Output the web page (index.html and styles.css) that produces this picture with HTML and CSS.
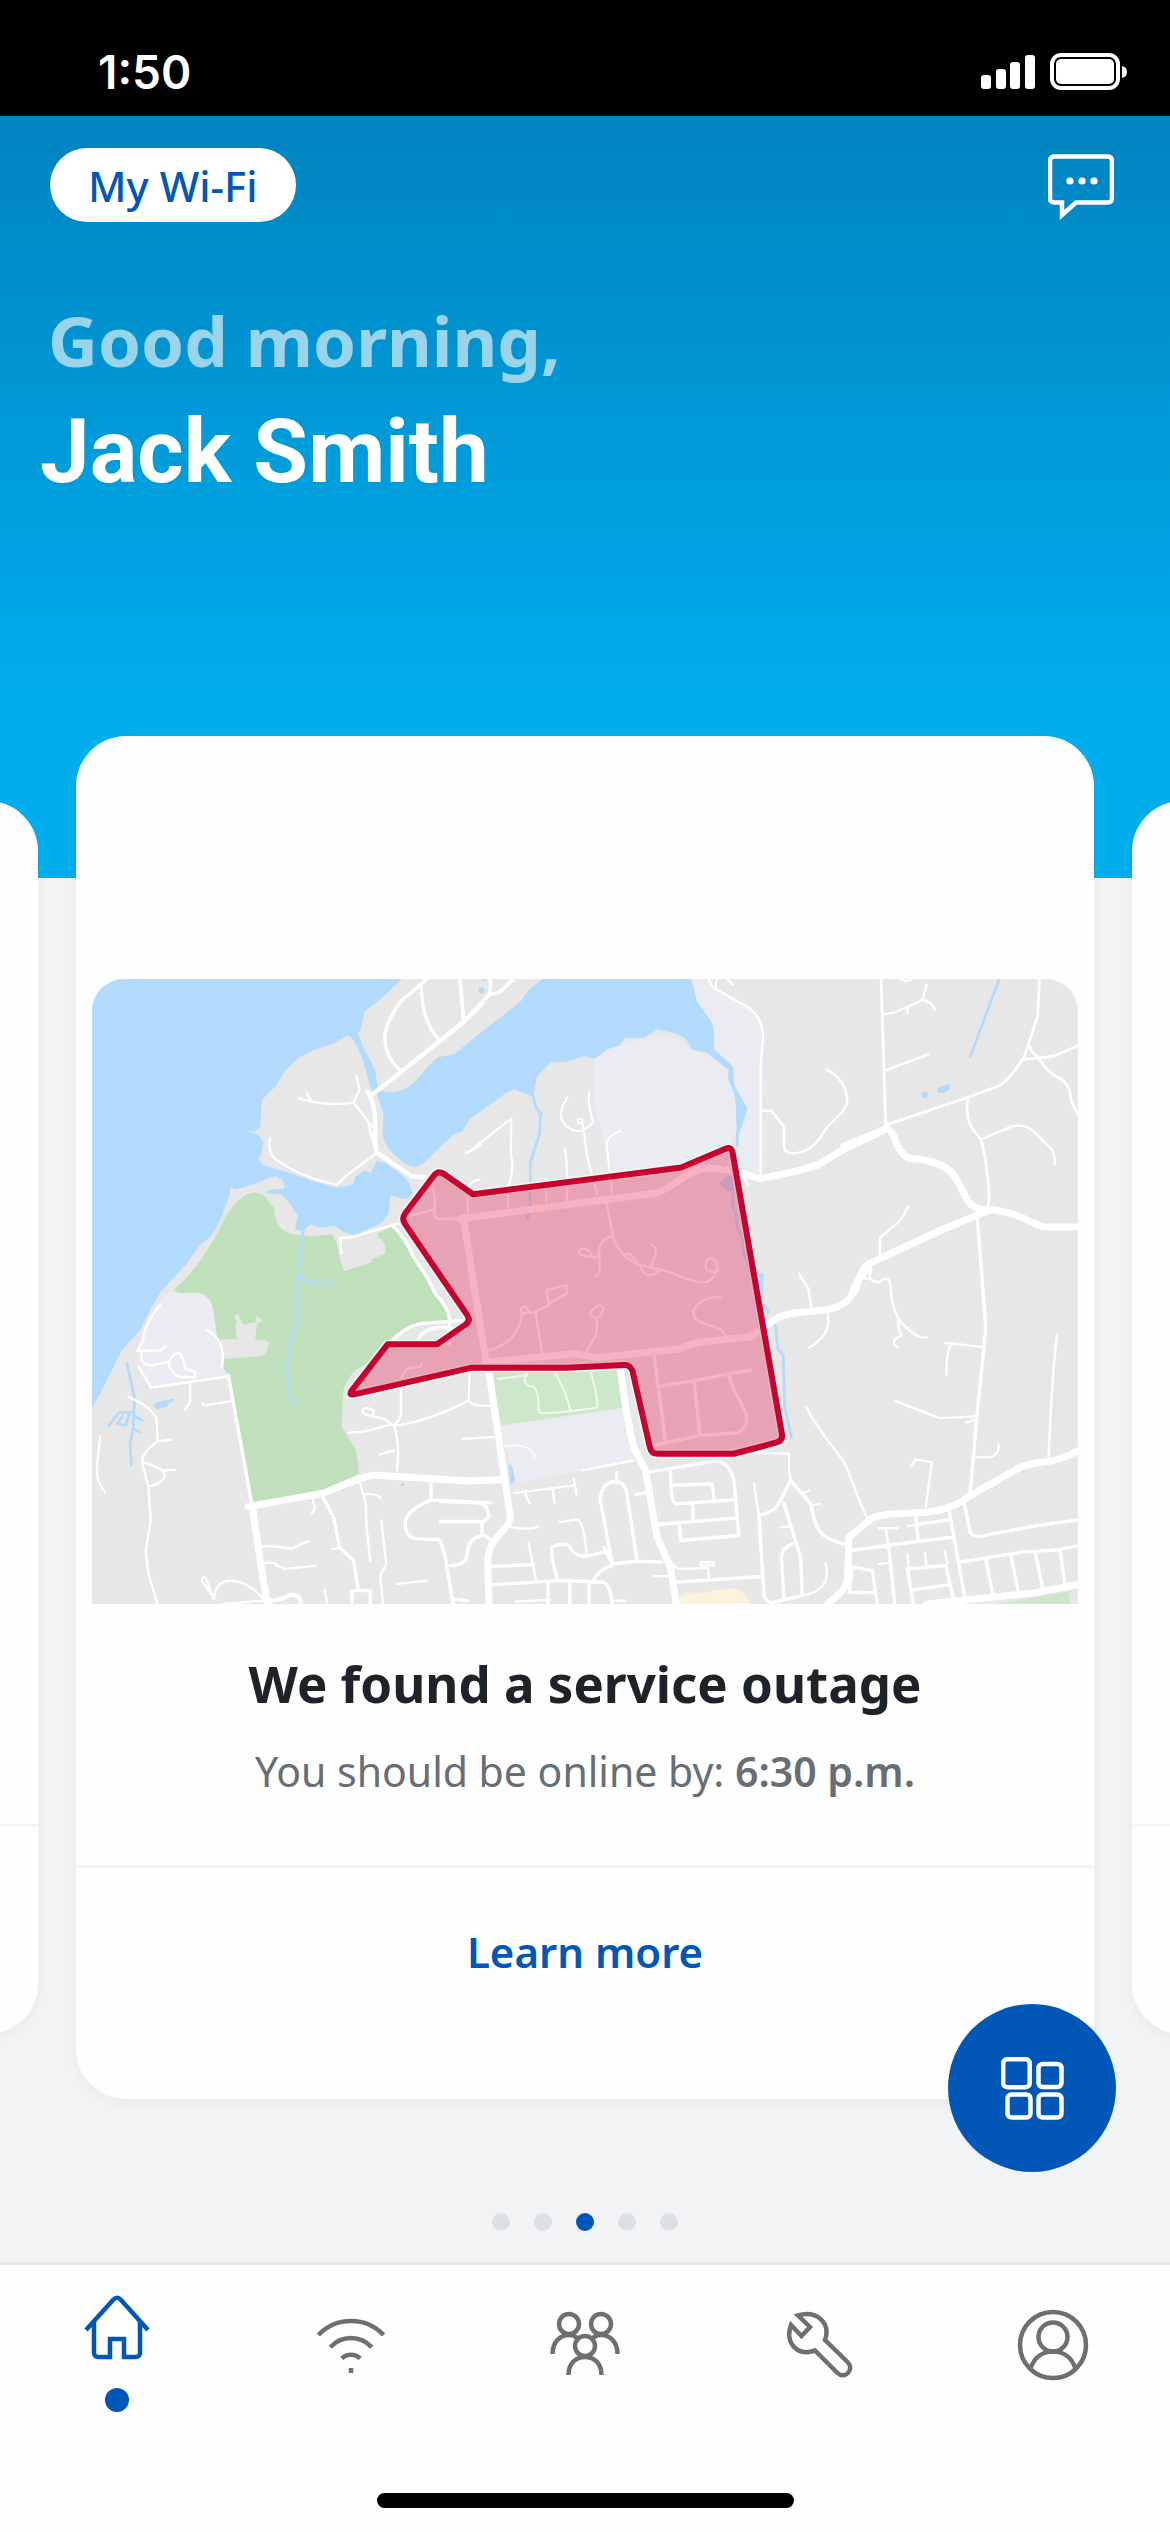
FILE: index.html
```html
<!DOCTYPE html>
<html lang="en">
<head>
  <meta charset="UTF-8">
  <meta name="viewport" content="width=device-width, initial-scale=1.0">
  <title>My Wi-Fi</title>
  <link rel="stylesheet" href="styles.css">
</head>
<body>

  <div class="statusbar">
    <span class="time">1:50</span>
    <div class="status-icons">
      <svg width="54" height="36" viewBox="0 0 54 36" fill="#fff">
        <rect x="0" y="21" width="10" height="14" rx="3"/>
        <rect x="15" y="15" width="10" height="20" rx="3"/>
        <rect x="29" y="8" width="10" height="27" rx="3"/>
        <rect x="44" y="1" width="10" height="34" rx="3"/>
      </svg>
      <svg width="78" height="38" viewBox="0 0 78 38">
        <rect x="2" y="2" width="66" height="33" rx="9" fill="none" stroke="#fff" stroke-width="4"/>
        <rect x="6" y="6" width="58" height="25" rx="5" fill="#fff"/>
        <path d="M72 13q5 1 5 6t-5 6z" fill="#fff"/>
      </svg>
    </div>
  </div>

  <header class="header">
    <div class="topbar">
      <button class="pill">My Wi-Fi</button>
      <button class="chat" aria-label="Chat">
        <svg width="66" height="68" viewBox="0 0 66 68">
          <path d="M6 2.500H60a4 4 0 0 1 4 4V44.500a4 4 0 0 1-4 4H28L14 61V48.500H6a4 4 0 0 1-4-4V6.500a4 4 0 0 1 4-4z" fill="none" stroke="#fff" stroke-width="4.500"/>
          <circle cx="22" cy="27" r="3.600" fill="#fff"/>
          <circle cx="34" cy="27" r="3.600" fill="#fff"/>
          <circle cx="46" cy="27" r="3.600" fill="#fff"/>
        </svg>
      </button>
    </div>
    <p class="greeting">Good morning,</p>
    <h1 class="name">Jack Smith</h1>
  </header>

  <main class="main">
    <div class="carousel">
      <div class="card side">
        <div class="card-body"></div>
        <div class="card-footer"></div>
      </div>

      <div class="card">
        <div class="card-body">
          <svg class="map" viewBox="0 0 2955 1872" role="img" aria-label="Map of the outage area">
            <!-- water, parks and campuses -->
            <g transform="translate(-36 -57)">
              <path class="water" d="M36 57H965L905 115 852 155 843 205 833 218 848 260 885 330 893 390Q950 405 985 380C1020 355 1050 300 1080 290L1120 283 1205 215 1320 125 1345 90 1385 57H1832L1850 125 1890 180Q1905 200 1903 215L1898 265 1958 320 1960 375Q2005 425 2000 450L1970 535 1965 440 1962 400 1942 355 1945 330 1880 278 1835 268 1815 235 1780 218 1730 208 1690 233 1635 233 1615 258 1585 265 1542 297 1512 288 1455 305 1410 307 1368 352 1360 410 1302 388 1275 400 1170 475 1145 515 1120 522 1080 560 1030 610Q1000 635 955 595 910 560 907 520L910 462 890 405 870 380 845 290 820 240 803 226 755 252 705 268 660 290 615 330 590 375 545 420 540 500 525 515 503 510 535 525 550 545 545 580 533 595 550 615 625 637 690 660 770 683 820 672 825 650 850 632 872 637 890 600 915 608 960 640 985 665 997 700Q985 720 965 715L930 705 925 760Q905 790 890 795L820 825 790 815 765 797 720 802 690 793 670 812 645 808 652 765 625 725 605 703 560 700 565 690 612 685Q620 660 582 645L540 665 470 688 452 682 445 715 420 780 395 825 360 855 320 910 245 990 215 1040 180 1110 125 1170 60 1300 36 1343z"/>
              <path class="park" d="M280 990C360 920 400 840 440 765 480 705 520 680 555 710L582 745C585 790 600 815 640 822L690 828 755 822 770 850 780 900 793 933 875 905 873 898 915 880 913 850 890 820 935 798Q960 820 1000 900L1070 1000 1105 1050V1085L1000 1095Q960 1105 915 1150L860 1210Q795 1240 788 1300L785 1400 825 1465Q835 1500 837 1540L720 1595 517 1625 445 1245 425 1225 400 1050z"/>
              <path class="land" d="M408 1138L470 1137 465 1095 472 1090 462 1068 475 1060 483 1083Q490 1100 505 1088L525 1087 530 1066 547 1080 530 1092 525 1140H555Q572 1145 564 1160 555 1187 540 1188L428 1196z"/>
              <path class="campus" d="M270 998H350Q390 1000 400 1050L405 1115 430 1170V1225L445 1245 213 1282 175 1218 170 1170 200 1095 240 1020z"/>
              <path class="thinwater" d="M580 625V650M670 805L660 880 655 940Q680 975 710 970 755 960 770 978M655 940L650 990 652 1080 630 1150 618 1220 625 1260 622 1300 653 1332M140 1205L163 1310 160 1400 150 1450 154 1518M118 1356H162M118 1356L84 1398M130 1362L112 1392M148 1358L136 1398M112 1390L142 1396M162 1366L190 1382M160 1405L182 1416"/>
              <path class="water" d="M220 1330L250 1320 282 1314 280 1322 262 1332 260 1340 228 1346zM960 1576L967 1565 975 1577zM890 830L905 830 900 838z"/>
            </g>
            <g transform="translate(1044 -57)">
              <path class="campus" d="M462 297L505 268 555 250 610 236 655 228 720 240 750 268 800 283 862 330 860 355 880 400 886 440V525L870 550 725 622 510 640 492 550 470 460Q452 390 462 297zM756 57H812L820 80 930 145Q968 175 968 240L960 640 905 625 892 540 921 445 882 378 879 320 820 265Q825 210 810 180L770 125z"/>
              <path class="thinwater" d="M278 405L285 440 300 460 298 520 270 605 269 730 260 783M890 515V560M884 690Q865 720 885 760L890 800 905 835 915 880"/>
              <path class="water" d="M275 405L290 440 308 460 300 480 290 450zM838 670Q850 640 890 650V690Q850 700 838 670zM903 868H918L930 920H920zM118 82a9 11 0 1 0 10 0zM122 57h14q-5 14-14 0zM955 940H968V1000H958z"/>
              <path class="park2" d="M155 1230L527 1218 547 1343 182 1395z"/>
              <path class="campus" d="M182 1395L547 1343 582 1500 420 1533 222 1568z"/>
              <path class="water" d="M204 1512q14-6 20 50l-14 8z"/>
              <path class="thinwater" d="M970 1030L985 1060M1003 1090L1012 1165 1028 1185 1032 1340 1053 1435"/>
              <path d="M718 1930V1910L735 1895 790 1897 830 1888 885 1883 912 1898 930 1930z" fill="#fdf3dd"/>
            </g>
            <g transform="translate(2004 -57)">
              <path class="thinwater" d="M715 57L628 292"/>
              <path class="water" d="M482 402q2-10 16-8l6 10-8 9q-14 1-14-11zM528 385L565 370 567 388 550 398H532z"/>
              <path class="park2" d="M720 1930L922 1892 930 1930z"/>
            </g>

            <!-- roads -->
            <g transform="translate(-36 -57)" class="roads">
              <path class="w6" d="M655 415L700 425Q760 437 820 427L838 390 828 348M680 400L695 425M820 427L880 505M1157 577Q1180 570 1200 545"/>
              <path class="w6" d="M570 533Q560 580 590 600 660 650 770 674L800 645 888 580M783 880L780 832Q820 835 850 820L963 787M865 495L888 575"/>
              <path class="w9" d="M1040 57L960 125Q915 190 914 230 912 290 962 332M1022 75Q1025 190 1080 242M1138 57L1150 185"/>
              <path class="w12" d="M870 408L1080 242 1150 185 1205 130M862 395Q890 440 884 520L888 575Q940 615 995 648L1040 652"/>
              <path class="w9" d="M935 795Q975 830 1000 890L1040 950 1065 1000Q1110 1050 1107 1080V1150M1145 1080L1020 1090Q970 1100 930 1150M1140 1110C1060 1090 1015 1110 1012 1150"/>
              <path class="w6" d="M975 770L1058 750M1048 670Q1070 700 1062 760 1065 780 1085 777L1140 774"/>
            </g>
            <g transform="translate(1044 -57)" class="roads">
              <path class="w5" d="M78 578Q110 570 130 540L213 475 212 580Q222 640 203 680V740M82 780V690Q90 660 118 658M382 410Q345 465 375 495 420 535 458 485 440 430 446 395M427 492L440 590 455 645 470 700M412 483a7 7 0 1 1 14 0 7 7 0 1 1-14 0M372 565Q382 590 380 720M318 655V725M540 513Q490 530 500 570L515 700"/>
              <path class="w6" d="M830 57Q820 75 830 90L920 140Q965 170 968 230L960 320V645M805 57Q810 80 830 90M860 57L877 74M960 452H992L1030 500V560Q1030 580 1060 580 1110 575 1140 530L1160 500 1205 455 1220 430Q1220 360 1157 328"/>
              <path class="w9" d="M60 57L70 185M0 245L70 185 145 105Q155 80 148 57M145 105L180 95 220 57"/>
              <path class="w6" d="M498 728L520 840Q550 900 600 915L690 935Q760 970 800 965 830 950 830 915 825 890 800 895 790 925 800 930 820 940 834 930M515 830Q480 830 475 880 485 940 465 947M472 892Q410 890 415 870 440 855 455 888M550 885Q570 870 590 910M635 855Q660 870 630 918M600 915Q605 950 640 942L657 930"/>
              <path class="w6" d="M147 1170Q235 1145 245 1060M252 1040a11 11 0 1 0 1 0M245 1060L285 1055 325 1035 318 990 378 973V1000L325 1030M285 1055L305 1180M435 1180L468 1120 470 1075Q440 1065 455 1050 480 1025 490 1045 480 1070 470 1075M855 1125C840 1090 790 1100 765 1075 745 1045 780 1010 840 1010 860 1020 880 1055M873 1062a13 11 0 1 0 12-11z"/>
              <path class="w9" d="M640 1180L675 1445M660 1277L755 1262 865 1240 930 1230M760 1260L778 1420M865 1240C870 1310 960 1370 895 1417L778 1425 640 1455"/>
              <path class="w16" d="M60 776L340 738 640 700C700 690 750 610 830 625L880 632 960 655Q1050 640 1130 615L1205 570 1340 505M70 774L95 940 140 1220"/>
              <path class="w16" d="M140 1205L400 1180 470 1192 720 1165Q760 1145 830 1140L930 1130 980 1095Q1010 1065 1060 1058L1160 1048Q1220 1035 1235 1000 1250 950 1285 925"/>
              <path class="w6" d="M1075 940L1103 985 1112 1040M1158 1048Q1180 1120 1105 1162M905 640L922 675"/>
            </g>
            <g transform="translate(2004 -57)" class="roads">
              <path class="w6" d="M368 163L400 158 485 120 498 73M485 120Q515 125 522 150M440 145V158M375 330L503 283M420 57q20 12 32 0M660 538L750 500Q790 488 820 515L870 565Q883 580 882 613M443 738L420 780 358 832V885M328 920V955H300M328 955Q350 975 370 955 390 950 390 990 395 1060 430 1095 475 1140 497 1130M413 1080Q410 1100 422 1125 390 1140 403 1155L410 1160"/>
              <path class="w7" d="M361 57L375 495 620 412 715 377Q750 355 790 290L830 170 836 57M805 255Q810 275 830 290 860 340 905 360 930 380 930 420L952 465M790 298L880 288 952 257M620 412Q615 480 635 505L660 538Q675 580 685 700L682 740"/>
              <path class="w9" d="M650 775L675 1105 650 1350 628 1595"/>
              <path class="w16" d="M250 558L378 505Q395 510 410 555 425 590 450 595 540 600 580 645L620 720Q640 750 680 748 740 750 800 780L845 800H952M680 752L540 810 325 910Q300 925 285 990"/>
            </g>
            <g transform="translate(-36 873)" class="roads">
              <path class="w6" d="M380 180Q440 210 425 290M240 105Q190 165 190 210L172 242 240 240 258 228M185 250Q180 285 215 285L265 275Q280 245 300 250 315 275 315 295L345 305V320H300Q270 310 265 275M175 288L213 352 330 335 445 318M330 335V395L315 418M450 393L372 405 366 398M145 380Q220 410 230 450L233 512Q180 550 187 580L205 650 212 750 197 840 205 910Q215 940 232 1000M233 512L275 508M187 575Q280 600 245 630 230 645 205 648M245 600L285 598M60 500C50 600 40 620 75 665 95 690 100 730M36 736L148 730 156 775M308 490L370 720 415 865M212 750Q240 720 290 722L370 723M330 730L305 760 320 778 330 765 318 750M320 778L326 800M205 904C290 905 300 875 350 868L520 865M36 916L122 913M515 378Q530 430 478 470M537 428C510 480 540 520 562 560 565 600 545 630 508 627"/>
              <path class="w6" d="M403 985L365 930Q370 910 380 930L400 985Q410 930 450 930 500 930 550 985M430 1000L550 990M545 828Q580 825 635 835 660 820 685 812M545 880Q585 870 590 885L615 895 705 886M697 685L705 715 693 730M733 958L742 1000M755 836L780 832M840 640L857 700 858 760 870 872M850 672Q895 668 900 683M903 750L918 880 900 915 908 1000M950 940L1040 930M805 487C880 487 900 465 935 463 910 435 870 440 850 430 840 410 860 410 880 420L878 440M962 355V430Q960 450 940 465 960 510 950 600M940 465C1000 465 1100 420 1115 415L1165 390 1168 300M900 552L942 540M1148 505L1240 500M1025 278Q1020 295 990 292 960 305 960 350M1165 390Q1175 410 1235 406"/>
              <path class="w9" d="M445 315L515 700M728 680L760 740 778 830 820 870 833 950M815 1000V960H870V1000M1052 635V688L1230 697M1048 690C980 720 965 750 980 785 990 810 1010 805 1075 807 1095 815 1095 850L1115 1000M1010 712Q1030 750 1060 750L1200 755M1035 870L1095 860M1035 870L1050 1000M1110 888Q1150 885 1158 860 1150 800 1200 798"/>
              <path class="w16" d="M505 708L730 668Q840 620 880 614L1160 632 1260 628M517 708Q540 880 562 1000"/>
              <path class="w12" d="M562 990Q600 990 625 975 660 965 662 1000"/>
            </g>
            <g transform="translate(1044 873)" class="roads">
              <path class="w5" d="M173 326L255 315Q245 345 280 350 295 360 295 425 310 432 390 422L470 412Q475 395 450 300M340 300Q380 370 390 422M190 528Q270 515 285 560M215 303H260V318" opacity=".7"/>
              <path class="w6" d="M220 668L405 645M400 625L408 672M337 655L342 697M255 660Q255 680 268 697M528 605V640M212 770Q270 780 293 767M358 755L410 747Q430 750 438 850M265 820L287 930M225 993L328 988M515 990H553M640 917H680M690 875L712 895 803 893 805 920M780 885V875H818V885H780M910 545L1045 550V600L1050 630M940 640L955 735M1085 670L1105 660M1115 705L1138 700M1020 770L1050 768M1155 880Q1175 960 1085 975M1097 410C1130 480 1180 530 1210 575 1240 640 1260 710 1280 745M425 600L580 570"/>
              <path class="w9" d="M625 605L820 572Q865 570 880 630L895 795 720 810 717 765M690 605Q690 700 705 700L880 688M697 645L815 640 820 685M757 700V750M650 762L885 743M585 672L615 667M490 830L515 880 590 872 665 875M515 880L480 690Q480 635 530 632 560 640 562 690L590 872M510 840L430 858Q400 855 385 825 360 815 335 830 330 850 350 925M515 885Q470 900 460 930M155 888L280 882M155 943L350 930 490 935Q510 945 515 1000M323 935V1000M388 940V1000M446 940V1000M710 935L960 918M955 735L970 970Q975 1000 1000 995L1085 975 1080 860 1030 700M955 733Q1000 730 1020 690L1050 630 1110 700C1125 760 1120 800 1210 820M1055 820Q1025 830 1022 860L1030 985M0 693L110 697Q145 700 145 740L130 753H0M125 755V790L155 810M30 885Q80 885 80 850 85 800 125 797M0 810L15 860 38 1000M35 985L80 990"/>
              <path class="w16" d="M145 300L210 740Q210 760 165 805 140 840 142 880L146 1000M540 300Q560 450 580 530L615 600 650 800 690 890 707 1000"/>
            </g>
            <g transform="translate(2004 873)" class="roads">
              <path class="w6" d="M553 218L665 230M572 222Q555 245 557 312M405 392L535 443 645 438M615 457L645 448M640 560H690Q715 555 713 523M888 197C875 300 870 400 863 560M450 587L465 567 513 575 495 710M355 773H410M375 773L383 825M355 880L385 877M442 767L465 763M440 853L445 895M493 847L497 890M552 843L560 880"/>
              <path class="w9" d="M610 695L628 785Q635 800 660 797L830 765 952 748M272 840L400 822 575 800M465 740L472 808M465 762L565 748M565 720L612 980M595 875L785 845 890 838 952 825M675 865L695 968M750 855L772 962M823 845L845 950M898 840L912 940M383 820L402 1000M440 895L555 885M440 895L458 1000M455 958L568 942M555 885L578 985M275 890L335 900 350 1000M275 890L265 965 345 967"/>
              <path class="w16" d="M952 540Q900 570 850 575 790 580 760 600L620 680Q580 715 500 725L400 730Q340 735 325 750L265 800 260 930Q250 965 200 1000M952 942L820 967 500 1000"/>
            </g>

            <!-- outage area -->
            <g transform="translate(-36 -57)">
              <path class="halo" d="M1061 646L975 759Q963 775 974 791L1161 1065Q1172 1082 1155 1093L1070 1152H922L815 1290Q803 1306 822 1302L1175 1222H1460L1632 1214Q1648 1213 1656 1232L1708 1460Q1712 1480 1732 1480H1960L2088 1446Q2107 1441 2104 1421L1956 578Q1953 558 1935 566L1802 622 1178 702 1090 641Q1073 630 1061 646z"/>
              <path class="outage" d="M1061 646L975 759Q963 775 974 791L1161 1065Q1172 1082 1155 1093L1070 1152H922L815 1290Q803 1306 822 1302L1175 1222H1460L1632 1214Q1648 1213 1656 1232L1708 1460Q1712 1480 1732 1480H1960L2088 1446Q2107 1441 2104 1421L1956 578Q1953 558 1935 566L1802 622 1178 702 1090 641Q1073 630 1061 646z"/>
            </g>
          </svg>
          <h2 class="title">We found a service outage</h2>
          <p class="eta">You should be online by: <b>6:30 p.m.</b></p>
        </div>
        <div class="card-footer">
          <a href="#" class="learn">Learn more</a>
        </div>
      </div>

      <div class="card side">
        <div class="card-body"></div>
        <div class="card-footer"></div>
      </div>
    </div>

    <div class="dots">
      <span></span>
      <span></span>
      <span class="on"></span>
      <span></span>
      <span></span>
    </div>

    <button class="fab" aria-label="Shortcuts">
      <svg width="63" height="63" viewBox="0 0 63 63" fill="none" stroke="#fff" stroke-width="4.500">
        <rect x="2.200" y="2.200" width="26.500" height="28" rx="4"/>
        <rect x="37.500" y="7" width="23" height="23" rx="4"/>
        <rect x="6.500" y="37.500" width="23" height="23" rx="4"/>
        <rect x="37.500" y="37.500" width="23" height="23" rx="4"/>
      </svg>
    </button>
  </main>

  <footer class="bottom">
    <nav class="nav">
      <a href="#" class="active" aria-label="Home">
        <svg viewBox="0 0 72 72">
          <path d="M5 38L32 8Q36 3.500 40 8L67 38M13 29V61a4 4 0 0 0 4 4H29V47H43V65H55a4 4 0 0 0 4-4V29"/>
        </svg>
        <span class="dot"></span>
      </a>
      <a href="#" aria-label="Wi-Fi">
        <svg viewBox="0 0 72 72">
          <path d="M3.400 26A45 45 0 0 1 68.600 26M15.300 38.300A27.500 27.500 0 0 1 56.700 38.300M26.800 49.500A13 13 0 0 1 45.200 49.500"/>
          <rect class="solid" x="33.800" y="59" width="4.500" height="5"/>
        </svg>
      </a>
      <a href="#" aria-label="Profiles">
        <svg viewBox="0 0 72 72">
          <circle cx="20" cy="15" r="10"/>
          <circle cx="52" cy="15" r="10"/>
          <circle cx="36" cy="37" r="10"/>
          <path d="M3.500 45C3.500 33 11 26 20 26q5 0 8 3M68.500 45C68.500 33 61 26 52 26q-5 0-8 3M19.500 66C19.500 54 27 48 36 48S52.500 54 52.500 66"/>
        </svg>
      </a>
      <a href="#" aria-label="Tools">
        <svg viewBox="0 0 72 72">
          <path d="M15 6.500L27 18 18.500 27 8 16C2 33 13 48 32 41.500L54.500 64A7 7 0 0 0 65 53.500L42 31C48 14 34 1 15 6.500z"/>
        </svg>
      </a>
      <a href="#" aria-label="Account">
        <svg viewBox="0 0 72 72">
          <circle cx="36" cy="36" r="33"/>
          <circle cx="36" cy="28" r="14.500"/>
          <path d="M13.500 60C17 48 26 42.500 36 42.500S55 48 58.500 60"/>
        </svg>
      </a>
    </nav>
    <div class="home-indicator"></div>
  </footer>

</body>
</html>
```
FILE: styles.css
```css
* {
  margin: 0;
  padding: 0;
  box-sizing: border-box;
}

body {
  background: #f2f3f5;
  font-family: "Noto Sans", "Open Sans", sans-serif;
  min-height: 100vh;
  display: flex;
  flex-direction: column;
}

button {
  border: 0;
  background: none;
  font-family: inherit;
  cursor: pointer;
}

svg {
  display: block;
}

.statusbar {
  background: #000;
  color: #fff;
  height: 116px;
  padding: 28px 42px 0 98px;
  display: flex;
  align-items: center;
  justify-content: space-between;
}
.time {
  font-family: Inter, sans-serif;
  font-size: 46px;
  font-weight: 600;
}
.status-icons {
  display: flex;
  align-items: center;
  gap: 15px;
}

.header {
  background: linear-gradient(180deg, #0083bf 0%, #00aeee 78%, #00aeee 100%);
  padding: 32px 40px 376px;
}
.topbar {
  display: flex;
  align-items: flex-end;
  justify-content: space-between;
  padding: 0 16px 0 10px;
  margin-bottom: 78px;
}
.pill {
  background: #fff;
  color: #0057b8;
  height: 74px;
  padding: 0 38px;
  border-radius: 37px;
  font-size: 42px;
  font-weight: 500;
}
.greeting {
  color: #9ad4eb;
  font-size: 69px;
  font-weight: 700;
  line-height: 80px;
  padding-left: 8px;
  margin-bottom: 22px;
}
.name {
  color: #fff;
  font-family: Roboto, sans-serif;
  font-size: 89px;
  font-weight: 700;
  line-height: 100px;
}

.main {
  position: relative;
  flex: 1;
  margin-top: -142px;
}
.carousel {
  display: flex;
  justify-content: center;
  gap: 38px;
  overflow-x: clip;
}
.card {
  flex: 0 0 87%;
  background: #fefefe;
  border-radius: 50px;
  box-shadow: 0 4px 12px rgba(0, 0, 0, 0.04);
  display: flex;
  flex-direction: column;
  text-align: center;
}
.card-body {
  flex: 1;
  padding: 243px 16px 66px;
}
.card-footer {
  border-top: 3px solid #f3f4f5;
  height: 234px;
  padding-top: 56px;
}
.side {
  margin: 65px 0;
}
.side .card-footer {
  height: 210px;
}
.title {
  color: #1d2329;
  font-size: 51px;
  font-weight: 700;
  line-height: 68px;
  margin: 45px 0 26px;
}
.eta {
  color: #686e74;
  font-size: 41px;
  line-height: 56px;
}
.eta b {
  font-weight: 600;
}
.learn {
  color: #0057b8;
  font-size: 42px;
  font-weight: 600;
  line-height: 56px;
  text-decoration: none;
}

.map {
  width: 100%;
  height: auto;
  background: #e7e7e7;
  border-radius: 32px 32px 0 0;
}
.land {
  fill: #e7e7e7;
}
.water {
  fill: #b2dafc;
}
.park {
  fill: #c0e0bb;
}
.park2 {
  fill: #cde7ca;
}
.campus {
  fill: #ebecf1;
}
.thinwater {
  fill: none;
  stroke: #b2dafc;
  stroke-width: 8;
}
.roads path {
  fill: none;
  stroke: #fff;
  stroke-linecap: round;
  stroke-linejoin: round;
}
.roads .w5 { stroke-width: 6; }
.roads .w6 { stroke-width: 7; }
.roads .w7 { stroke-width: 8; }
.roads .w9 { stroke-width: 10; }
.roads .w12 { stroke-width: 13; }
.roads .w16 { stroke-width: 21; }
.halo {
  fill: none;
  stroke: #eaf9f6;
  stroke-width: 28;
  stroke-linejoin: round;
}
.outage {
  fill: rgba(233, 61, 106, 0.4);
  stroke: #c8002d;
  stroke-width: 18;
  stroke-linejoin: round;
}

.dots {
  display: flex;
  justify-content: center;
  gap: 24px;
  margin-top: 114px;
}
.dots span {
  width: 18px;
  height: 18px;
  border-radius: 50%;
  background: #dcdfe4;
}
.dots .on {
  background: #0057b8;
}

.fab {
  position: absolute;
  right: 54px;
  bottom: 90px;
  width: 168px;
  height: 168px;
  border-radius: 50%;
  background: #0057b8;
  display: flex;
  align-items: center;
  justify-content: center;
}

.bottom {
  background: #fefefe;
  border-top: 3px solid #e6e8e8;
  padding-bottom: 24px;
}
.nav {
  display: flex;
  height: 228px;
}
.nav a {
  flex: 1;
  padding-top: 44px;
  display: flex;
  flex-direction: column;
  align-items: center;
  color: #6c7073;
}
.nav .active {
  padding-top: 27px;
  color: #0057b8;
}
.nav svg {
  width: 72px;
  height: 72px;
  fill: none;
  stroke: currentColor;
  stroke-width: 4.5;
}
.nav svg .solid {
  fill: currentColor;
  stroke: none;
}
.dot {
  width: 24px;
  height: 24px;
  margin-top: 24px;
  border-radius: 50%;
  background: #0057b8;
}
.home-indicator {
  width: 417px;
  height: 15px;
  margin: 0 auto;
  border-radius: 8px;
  background: #000;
}
```
